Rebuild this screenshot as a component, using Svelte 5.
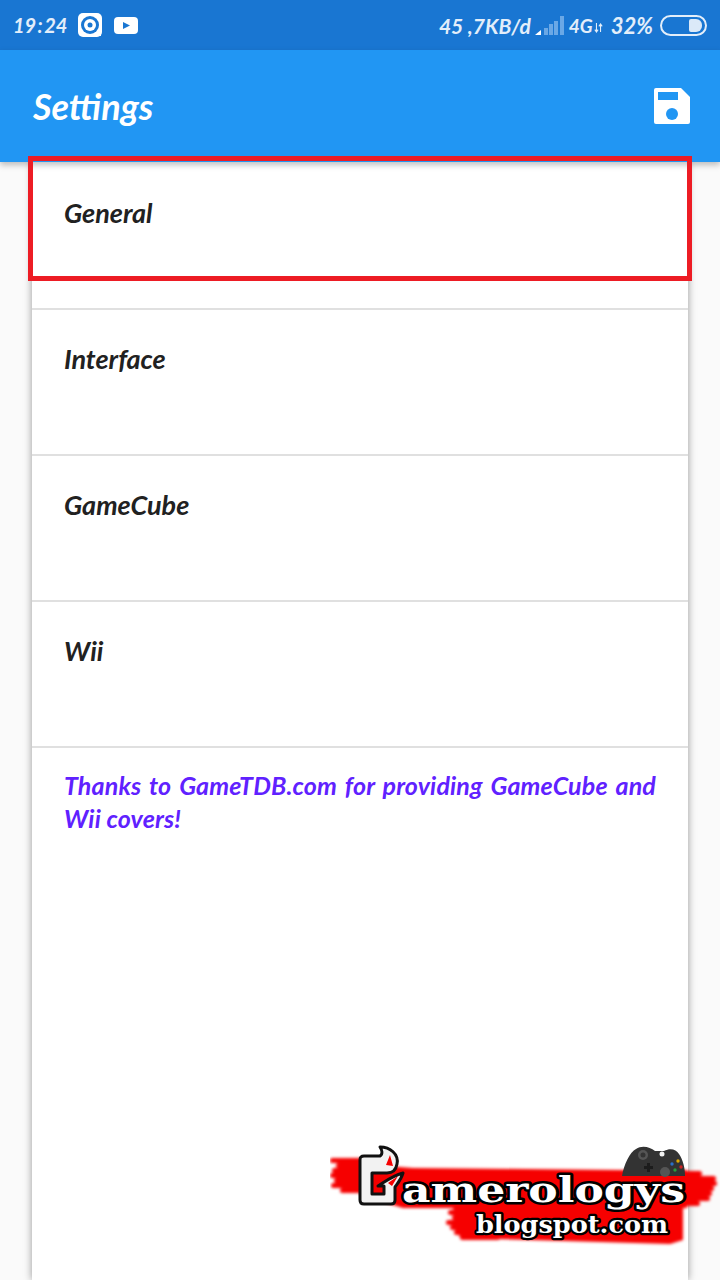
<script>
  const sections = ["General", "Interface", "GameCube", "Wii"];

  // signal bars: x, top
  const bars = [
    [9, 12],
    [14, 8],
    [19, 5],
    [25, 0],
  ];

  // brush streaks at the ends of the red logo band: x, y, width
  const streaks = [
    [0, 18, 60], [6, 23, 60], [2, 28, 70], [0, 33, 70], [4, 38, 70], [1, 43, 70], [10, 48, 60],
    [320, 31, 52], [320, 36, 66], [320, 41, 67], [320, 46, 64], [320, 51, 62], [320, 56, 60], [320, 61, 50],
    [118, 70, 40], [122, 75, 40], [116, 80, 40], [120, 85, 40], [124, 90, 40], [130, 95, 40],
  ];
</script>

<div class="screen">
  <div class="status">
    <div class="side">
      <span class="time">19 : 24</span>
      <svg class="ic-music" width="24" height="24" viewBox="0 0 24 24">
        <path d="M5 0H19A5 5 0 0 1 24 5V19A5 5 0 0 1 19 24H5A5 5 0 0 1 0 19V5A5 5 0 0 1 5 0Z" fill="#fff" />
        <circle cx="12" cy="12" r="9" fill="#1976d2" />
        <circle cx="12" cy="12" r="6" fill="#fff" />
        <circle cx="12" cy="12" r="2.5" fill="#1976d2" />
        <path d="M16 20H23V23H16Z" fill="#fff" />
      </svg>
      <svg class="ic-yt" width="24" height="17" viewBox="0 0 24 17">
        <rect width="24" height="17" rx="4" fill="#fff" />
        <path d="M9 5L16 8.5L9 12Z" fill="#1976d2" />
      </svg>
    </div>
    <div class="side right">
      <span class="speed">45 ,7KB/d</span>
      <svg class="signal" width="29" height="19" viewBox="0 0 29 19">
        <path d="M0 19L6 14V19Z" fill="#fff" />
        {#each bars as [x, top]}
          <rect {x} y={top} width="4" height={19 - top} fill="#6aa8e6" />
        {/each}
      </svg>
      <span class="net">4G</span>
      <svg class="arrows" width="9" height="12" viewBox="0 0 11 12">
        <path d="M3 0V10M1 8L3 11L5 8M8 11V1M6 4L8 1L10 4" fill="none" stroke="#e3eefa" stroke-width="1.3" />
      </svg>
      <span class="pct">32%</span>
      <span class="battery"><i></i></span>
    </div>
  </div>

  <header class="bar">
    <h1>Settings</h1>
    <svg width="36" height="36" viewBox="0 0 36 36">
      <path d="M2 0H27L36 9V34A2 2 0 0 1 34 36H2A2 2 0 0 1 0 34V2A2 2 0 0 1 2 0Z" fill="#fff" />
      <rect x="4" y="4" width="20" height="8" fill="#2196f3" />
      <circle cx="18" cy="26" r="6" fill="#2196f3" />
    </svg>
  </header>

  <main class="card">
    {#each sections as name}
      <div class="row">{name}</div>
    {/each}
    <p class="thanks">Thanks to GameTDB.com for providing GameCube and Wii covers!</p>
  </main>

  <div class="highlight"></div>

  <svg class="logo" width="390" height="112" viewBox="0 0 390 112">
    <defs>
      <filter id="soft" x="-5%" y="-5%" width="110%" height="110%"><feGaussianBlur stdDeviation="1.8" /></filter>
    </defs>
    <g fill="#f60000" filter="url(#soft)">
      <path d="M30 24L83 28L290 30L357 30V68H353V100L340 104L130 98L123 68H73L30 55Z" />
      {#each streaks as [x, y, w]}
        <rect {x} {y} width={w} height="5" rx="2.5" />
      {/each}
    </g>
    <path d="M292 36C294 24 300 12 306 9C312 5 320 7 325 11L334 11C340 8 346 9 349 14C353 20 355 28 355 36Z" fill="#333" />
    <circle cx="313" cy="15" r="5" fill="#555" />
    <circle cx="313" cy="15" r="2.5" fill="#333" />
    <path d="M317 23H320V26H323V29H320V32H317V29H314V26H317Z" fill="#1c1c1c" />
    <circle cx="335" cy="32" r="5" fill="#555" />
    <circle cx="332" cy="14" r="2.5" fill="#f2f2f2" />
    <circle cx="348" cy="21" r="1.7" fill="#e0a800" />
    <circle cx="342" cy="24" r="1.7" fill="#2a6fc9" />
    <circle cx="351" cy="27" r="1.7" fill="#c22" />
    <circle cx="345" cy="30" r="1.7" fill="#2a9a3c" />
    <path class="bigg" d="M34 16H50C53 14 52 10 50 7C60 7 69 14 67 24C66 30 62 33 57 33L42 33V54H54V46L48 46C56 41 62 36 73 33C71 40 67 44 65 47V60C65 63 63 64 61 64H34C31 64 30 62 30 60V20C30 17 31 16 34 16Z" />
    <path d="M56 25L60 15L63 26Z M58 43L68 36L62 46Z" fill="#f60000" />
    <text class="word" x="72" y="62" textLength="283" lengthAdjust="spacingAndGlyphs">amerologys</text>
    <text class="sub" x="146" y="93" textLength="192" lengthAdjust="spacingAndGlyphs">blogspot.com</text>
  </svg>
</div>

<style>
  :global(body) {
    margin: 0;
    background: #fafafa;
  }

  .screen {
    position: relative;
    width: 720px;
    height: 1280px;
    overflow: hidden;
    display: flex;
    flex-direction: column;
    font-family: "Lato", sans-serif;
    font-style: italic;
    background: #fafafa;
  }

  .status {
    height: 50px;
    flex: none;
    background: #1976d2;
    display: flex;
    align-items: center;
    justify-content: space-between;
    padding: 0 13px;
    color: #e3eefa;
    font-size: 21px;
    font-weight: 700;
  }

  .side {
    display: flex;
    align-items: center;
  }

  .time {
    width: 52px;
    font-size: 20px;
    word-spacing: -3px;
    white-space: nowrap;
  }

  .ic-music {
    margin-left: 13px;
  }

  .ic-yt {
    margin-left: 12px;
  }

  .speed {
    white-space: nowrap;
  }

  .signal {
    margin: 0 5px 0 4px;
  }

  .net {
    font-size: 19px;
    white-space: nowrap;
  }

  .arrows {
    margin: 6px 0 0 1px;
  }

  .pct {
    margin-left: 8px;
    font-size: 22px;
  }

  .battery {
    width: 47px;
    height: 21px;
    box-sizing: border-box;
    margin-left: 7px;
    border: 2px solid #e3eefa;
    border-radius: 11px;
    display: flex;
    justify-content: flex-end;
    padding: 2px 3px;
  }

  .battery i {
    width: 13px;
    background: #dbe9f8;
    border-radius: 2px 6px 6px 2px;
  }

  .bar {
    height: 112px;
    flex: none;
    background: #2196f3;
    display: flex;
    align-items: center;
    justify-content: space-between;
    padding: 0 30px 0 33px;
    box-shadow: 0 3px 6px rgba(0, 0, 0, 0.25);
    position: relative;
    z-index: 1;
  }

  h1 {
    margin: 0;
    color: #fff;
    font-size: 36px;
    font-weight: 700;
    font-style: italic;
  }

  .card {
    flex: 1;
    width: 656px;
    margin: 0 32px;
    padding-top: 2px;
    background: #fff;
    box-shadow: 0 0 8px rgba(0, 0, 0, 0.4);
  }

  .row {
    height: 146px;
    box-sizing: border-box;
    border-bottom: 2px solid #e0e0e0;
    padding: 31px 32px 0;
    font-size: 27px;
    font-weight: 700;
    line-height: 36px;
    color: #212121;
  }

  .thanks {
    margin: 0;
    padding: 21px 32px 0;
    color: #6021ff;
    font-size: 25px;
    font-weight: 700;
    line-height: 33px;
    letter-spacing: 0.15px;
    text-align: justify;
  }

  .highlight {
    position: absolute;
    left: 28px;
    top: 156px;
    width: 664px;
    height: 125px;
    box-sizing: border-box;
    border: 5px solid #ed1c24;
    z-index: 2;
  }

  .logo {
    position: absolute;
    left: 330px;
    top: 1140px;
  }

  .bigg {
    fill: #f2f2f2;
    stroke: #111;
    stroke-width: 3;
    stroke-linejoin: round;
  }

  .word,
  .sub {
    font-family: "DejaVu Serif", serif;
    font-style: normal;
    font-weight: 700;
    fill: #fff;
    stroke: #000;
    paint-order: stroke;
    stroke-linejoin: round;
  }

  .word {
    font-size: 36px;
    stroke-width: 5;
  }

  .sub {
    font-size: 24px;
    stroke-width: 4.5;
  }
</style>
